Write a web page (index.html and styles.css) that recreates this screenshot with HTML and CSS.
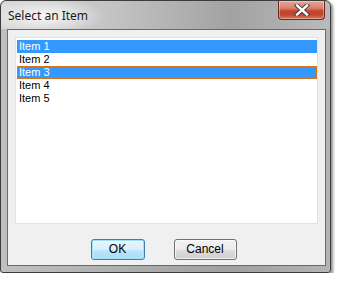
FILE: index.html
```html
<!DOCTYPE html>
<html>
<head>
<meta charset="utf-8">
<link rel="stylesheet" href="styles.css">
</head>
<body>
<div class="window">
  <div class="titlebar">
    <span class="title">Select an Item</span>
    <div class="close">
      <svg width="20" height="12" viewBox="0 0 20 12">
        <path d="M5 1.5 L15 10.5 M15 1.5 L5 10.5" stroke="#3a3a3a" stroke-width="4.2" stroke-linecap="square"/>
        <path d="M5 1.5 L15 10.5 M15 1.5 L5 10.5" stroke="#ffffff" stroke-width="2.4" stroke-linecap="square"/>
      </svg>
    </div>
  </div>
  <div class="client">
    <div class="listbox">
      <div class="item sel">Item 1</div>
      <div class="item">Item 2</div>
      <div class="item sel focus">Item 3</div>
      <div class="item">Item 4</div>
      <div class="item">Item 5</div>
    </div>
    <div class="buttons">
      <div class="btn ok">OK</div>
      <div class="btn">Cancel</div>
    </div>
  </div>
</div>
</body>
</html>
```
FILE: styles.css
```css
html, body {
  margin: 0;
  padding: 0;
  background: #ffffff;
}
.window {
  width: 329px;
  height: 271px;
  border: 1px solid #3c3c3c;
  border-radius: 6px 6px 3px 3px;
  background: linear-gradient(90deg, #c0c0c0 0%, #adadad 40%, #a0a0a0 70%, #b4b4b4 100%);
  box-shadow: 2px 2px 3px rgba(0,0,0,0.45);
  display: flex;
  flex-direction: column;
  font-family: "Liberation Sans", Arial, sans-serif;
}
.titlebar {
  height: 28px;
  display: flex;
  align-items: flex-start;
  justify-content: space-between;
  padding-left: 7px;
  padding-right: 5px;
  border-radius: 6px 6px 0 0;
  background:
    radial-gradient(ellipse 60px 18px at 45px 15px, rgba(255,255,255,0.85), rgba(255,255,255,0) 100%),
    linear-gradient(90deg, #d8d8d8 0%, #c2c2c2 35%, #a2a2a2 70%, #bababa 100%);
}
.title {
  font-family: "Noto Sans", "Open Sans", sans-serif;
  font-size: 12px;
  color: #1a1a1a;
  margin-top: 6px;
}
.close {
  width: 45px;
  height: 18px;
  border: 1px solid #6e2a20;
  border-top: none;
  border-radius: 0 0 4px 4px;
  background: linear-gradient(180deg, #e6a598 0%, #d88270 40%, #c2442e 55%, #c0452f 75%, #d8785f 100%);
  box-shadow: inset 0 0 0 1px rgba(255,255,255,0.35);
  display: flex;
  align-items: center;
  justify-content: center;
}
.client {
  flex: 1;
  margin: 0 4px 6px 6px;
  border: 1px solid #6a6a6a;
  background: #f0f0f0;
  display: flex;
  flex-direction: column;
  padding: 7px 7px 0 7px;
}
.listbox {
  height: 183px;
  background: #ffffff;
  border: 1px solid #e2e2e2;
  padding: 2px 0 0 1px;
}
.item {
  height: 13px;
  line-height: 13px;
  font-size: 11px;
  color: #000000;
  padding-left: 2px;
  box-sizing: border-box;
}
.item.sel {
  background: #3399ff;
  color: #ffffff;
}
.item.focus {
  border: 1px dotted #d9761c;
  padding-left: 1px;
  line-height: 11px;
}
.buttons {
  display: flex;
  justify-content: center;
  gap: 29px;
  padding-top: 15px;
  padding-right: 6px;
}
.btn {
  width: 61px;
  height: 19px;
  border: 1px solid #707070;
  border-radius: 3px;
  background: linear-gradient(180deg, #f2f2f2 0%, #ebebeb 50%, #dddddd 51%, #cfcfcf 100%);
  box-shadow: inset 0 0 0 1px rgba(255,255,255,0.7);
  font-size: 12px;
  line-height: 19px;
  text-align: center;
  color: #000000;
}
.btn.ok {
  width: 52px;
  border-color: #3c7fb1;
  background: linear-gradient(180deg, #eaf6fd 0%, #d9f0fc 50%, #bee6fd 51%, #a7d9f5 100%);
  box-shadow: inset 0 0 0 1px #9fe1f8, inset 0 0 2px 1px rgba(255,255,255,0.6);
}
```
